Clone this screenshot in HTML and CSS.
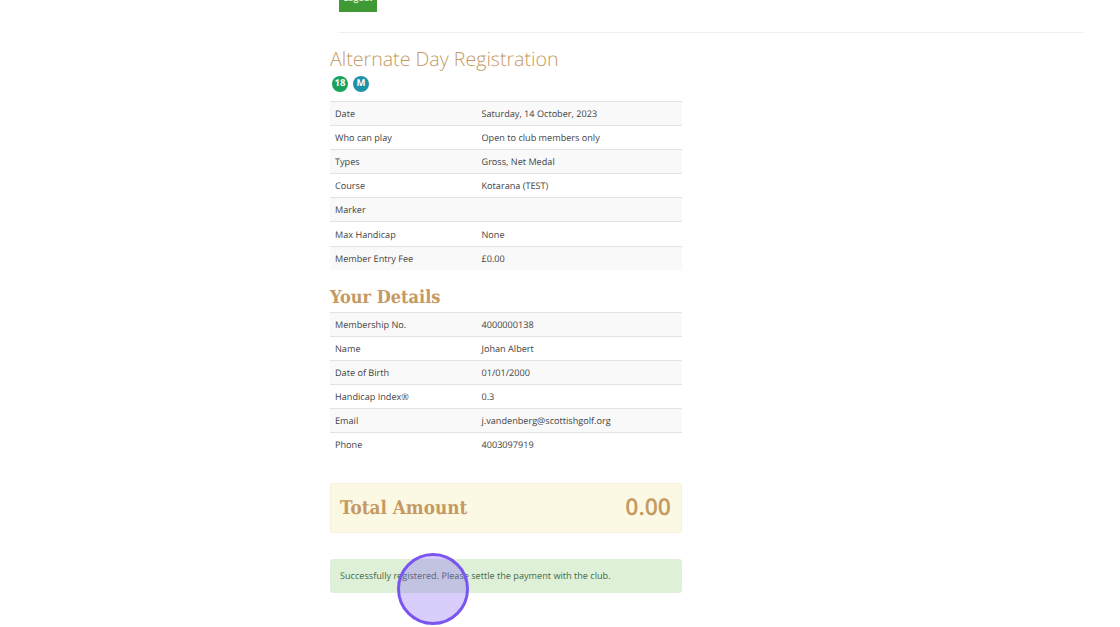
FILE: index.html
```html
<!DOCTYPE html>
<html lang="en">
<head>
<meta charset="utf-8">
<title>Alternate Day Registration</title>
<link rel="stylesheet" href="styles.css">
</head>
<body>
<div class="page">
  <header class="top">
    <a class="logout">Logout</a>
    <div class="rule"></div>
  </header>
  <main class="content">
    <h1 class="title">Alternate Day Registration</h1>
    <div class="badges">
      <span class="badge green">18</span>
      <span class="badge teal">M</span>
    </div>
    <div class="table">
      <div class="row"><span class="label">Date</span><span>Saturday, 14 October, 2023</span></div>
      <div class="row"><span class="label">Who can play</span><span>Open to club members only</span></div>
      <div class="row"><span class="label">Types</span><span>Gross, Net Medal</span></div>
      <div class="row"><span class="label">Course</span><span>Kotarana (TEST)</span></div>
      <div class="row"><span class="label">Marker</span><span></span></div>
      <div class="row"><span class="label">Max Handicap</span><span>None</span></div>
      <div class="row"><span class="label">Member Entry Fee</span><span>£0.00</span></div>
    </div>
    <h2 class="subtitle">Your Details</h2>
    <div class="table">
      <div class="row"><span class="label">Membership No.</span><span>4000000138</span></div>
      <div class="row"><span class="label">Name</span><span>Johan Albert</span></div>
      <div class="row"><span class="label">Date of Birth</span><span>01/01/2000</span></div>
      <div class="row"><span class="label">Handicap Index®</span><span>0.3</span></div>
      <div class="row"><span class="label">Email</span><span>j.vandenberg@scottishgolf.org</span></div>
      <div class="row"><span class="label">Phone</span><span>4003097919</span></div>
    </div>
    <div class="total"><span>Total Amount</span><span class="amount">0.00</span></div>
    <div class="alert">Successfully registered. Please settle the payment with the club.</div>
  </main>
  <div class="pointer"></div>
</div>
</body>
</html>
```

FILE: styles.css
```css
* { box-sizing: border-box; }
html, body { margin: 0; height: 100%; }
body {
  background: #fff;
  font-family: "Open Sans", "Liberation Sans", sans-serif;
  font-size: 9.13px;
  color: #444;
  overflow: hidden;
  text-rendering: geometricPrecision;
}
.page { position: relative; height: 627px; overflow: hidden; padding-left: 330px; }
.top { margin-left: 9px; margin-right: 37px; }
.logout {
  display: flex;
  align-items: flex-end;
  justify-content: center;
  width: 38px;
  height: 12px;
  padding-bottom: 8px;
  background: #3f9a35;
  color: #fff;
  font-size: 9px;
  line-height: 12px;
  overflow: hidden;
}
.rule { height: 1px; margin-top: 20px; background: #eee; }
.content { width: 352px; }
.title {
  margin: 13px 0 0;
  font-size: 19.6px;
  line-height: 26px;
  font-weight: 300;
  color: #c49a62;
}
.badges { display: flex; gap: 5px; margin: 4px 0 9px 2px; height: 16px; }
.badge {
  width: 16px;
  height: 16px;
  border-radius: 50%;
  display: flex;
  align-items: center;
  justify-content: center;
  color: #fff;
  font-size: 9.5px;
  font-weight: 700;
  line-height: 1;
  padding-bottom: 2px;
}
.green { background: #18a25a; }
.teal { background: #1c93a8; }
.table { display: flex; flex-direction: column; }
.row {
  display: grid;
  grid-template-columns: 146.5px 1fr;
  height: 24.1px;
  padding-left: 5px;
  align-items: center;
  border-top: 1px solid #e2e2e2;
}
.row:nth-child(odd) { background: #f9f9f9; }
.subtitle {
  margin: 15px 0 2px;
  font-family: "DejaVu Serif Condensed", "DejaVu Serif", serif;
  font-size: 18px;
  line-height: 25px;
  font-weight: 700;
  color: #c49a62;
}
.total {
  display: flex;
  justify-content: space-between;
  align-items: center;
  height: 50px;
  margin-top: 27px;
  padding: 0 10px 1px 9px;
  background: #fbf8e4;
  border: 1px solid #f8f0d8;
  border-radius: 3px;
  font-family: "DejaVu Serif Condensed", "DejaVu Serif", serif;
  font-size: 18.8px;
  font-weight: 700;
  color: #c49a62;
}
.amount {
  font-family: "Open Sans", "Liberation Sans", sans-serif;
  font-size: 23px;
  font-weight: 600;
  padding-bottom: 4px;
}
.alert {
  display: flex;
  align-items: center;
  height: 34px;
  margin-top: 26px;
  padding: 0 10px 1px;
  background: #dff0d8;
  border-radius: 3px;
  color: #46694a;
}
.pointer {
  position: absolute;
  left: 397px;
  top: 553px;
  width: 72px;
  height: 72px;
  border-radius: 50%;
  border: 3px solid #7a55f0;
  background: rgba(130, 90, 245, 0.3);
}
```
